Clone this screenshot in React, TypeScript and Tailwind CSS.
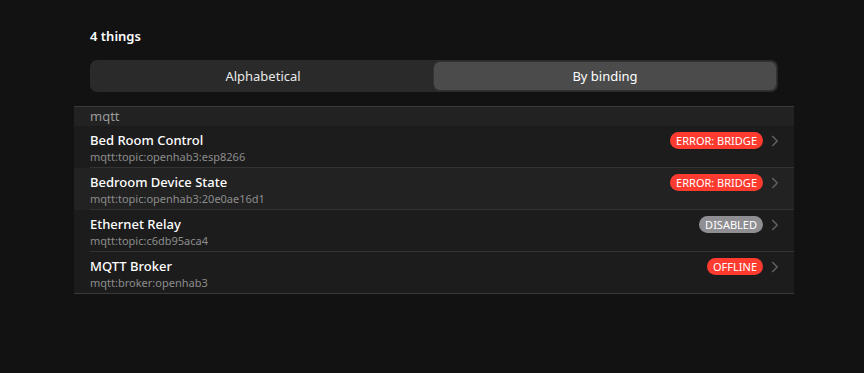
import { ChevronRight } from 'lucide-react';

type Thing = {
    label: string;
    uid: string;
    status: string;
    tone: 'red' | 'gray';
    highlight?: boolean;
};

const things: Thing[] = [
    { label: 'Bed Room Control', uid: 'mqtt:topic:openhab3:esp8266', status: 'ERROR: BRIDGE', tone: 'red' },
    { label: 'Bedroom Device State', uid: 'mqtt:topic:openhab3:20e0ae16d1', status: 'ERROR: BRIDGE', tone: 'red', highlight: true },
    { label: 'Ethernet Relay', uid: 'mqtt:topic:c6db95aca4', status: 'DISABLED', tone: 'gray' },
    { label: 'MQTT Broker', uid: 'mqtt:broker:openhab3', status: 'OFFLINE', tone: 'red' },
];

export default function App() {
    return (
        <div
            className="w-[864px] h-[373px] bg-[#121212] text-white overflow-hidden"
            style={{ fontFamily: '"Noto Sans", "Open Sans", sans-serif' }}
        >
            <div className="pt-[27px] px-[90px]">
                <h2 className="text-[13px] font-semibold leading-[18px]">4 things</h2>
            </div>

            {/* Segmented sort toggle */}
            <div className="mt-[15px] mx-[90px] w-[688px] h-[32px] bg-[#2a2a2a] rounded-[7px] p-[2px] flex">
                <button className="flex-1 text-[13px] leading-[28px] text-[#e8e8e8] rounded-[6px]">Alphabetical</button>
                <button className="flex-1 text-[13px] leading-[28px] text-white bg-[#4b4b4b] rounded-[6px] shadow-[0_0_0_1px_#333]">By binding</button>
            </div>

            {/* Thing list */}
            <div className="mt-[14px] ml-[74px] w-[720px] border-t border-[#3a3a3a]">
                <div className="h-[19px] bg-[#222222] pl-[16px] text-[13px] leading-[18px] text-[#9a9a9a]">mqtt</div>
                {things.map((thing, i) => (
                    <div
                        key={thing.uid}
                        className={`pl-[16px] ${thing.highlight ? 'bg-[#222222]' : 'bg-[#1c1c1c]'} ${i === things.length - 1 ? 'border-b border-[#3a3a3a]' : ''}`}
                    >
                        <div className={`pt-[6px] pb-[2px] pr-[10px] ${i < things.length - 1 ? 'border-b border-[#333333]' : ''}`}>
                            <div className="flex items-center h-[17px]">
                                <div className="flex-1 text-[13px] font-medium leading-[17px] text-white">{thing.label}</div>
                                <span
                                    className={`h-[17px] px-[6px] rounded-full text-[11px] leading-[17px] text-white ${thing.tone === 'red' ? 'bg-[#ff3b30]' : 'bg-[#8e8e93]'}`}
                                >
                                    {thing.status}
                                </span>
                                <ChevronRight className="ml-[3px] w-[18px] h-[18px] text-[#5e5e5e]" strokeWidth={2.25} />
                            </div>
                            <div className="text-[11px] leading-[16px] text-[#8c8c8c]">{thing.uid}</div>
                        </div>
                    </div>
                ))}
            </div>
        </div>
    );
}
